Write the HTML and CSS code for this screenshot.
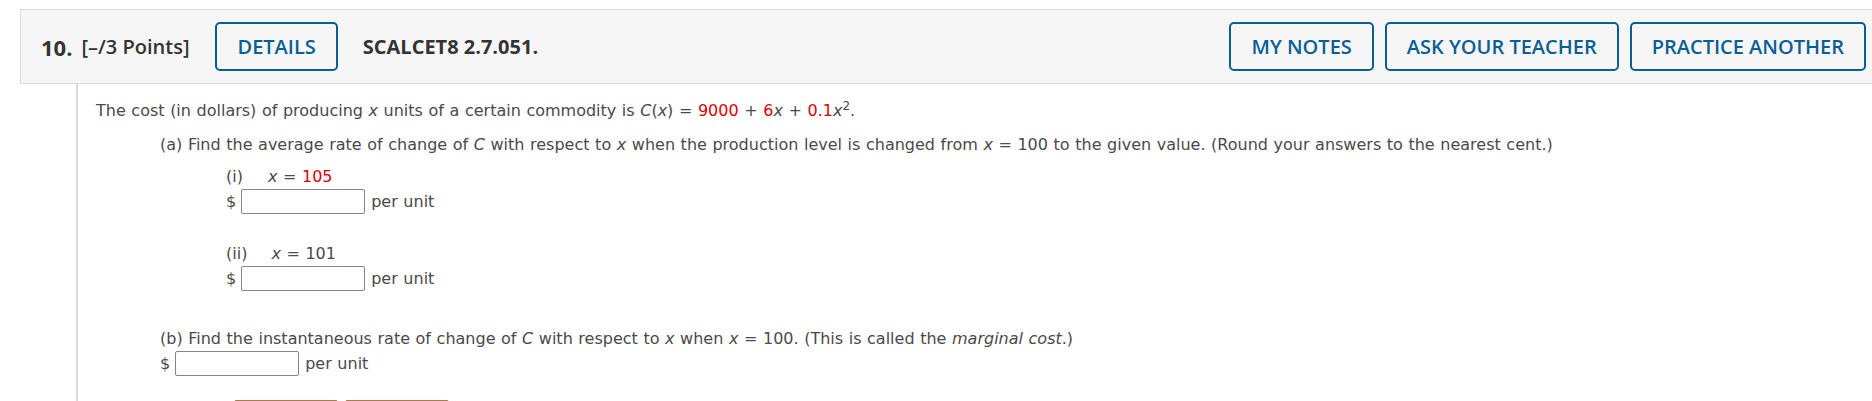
FILE: index.html
```html
<!DOCTYPE html>
<html lang="en">
<head>
<meta charset="utf-8">
<title>Question 10</title>
<link rel="stylesheet" href="styles.css">
</head>
<body>
<div class="question">
  <div class="qhead">
    <span class="qnum">10.</span>
    <span class="qpts">[–/3 Points]</span>
    <button class="hbtn">DETAILS</button>
    <span class="qref">SCALCET8 2.7.051.</span>
    <div class="qactions">
      <button class="hbtn">MY NOTES</button>
      <button class="hbtn">ASK YOUR TEACHER</button>
      <button class="hbtn">PRACTICE ANOTHER</button>
    </div>
  </div>
  <div class="qbody">
    <div class="line intro">The cost (in dollars) of producing <i>x</i> units of a certain commodity is <i>C</i>(<i>x</i>) = <span class="red">9000</span> + <span class="red">6</span><i>x</i> + <span class="red">0.1</span><i>x</i><sup>2</sup>.</div>
    <div class="part">
      <div class="line">(a) Find the average rate of change of <i>C</i> with respect to <i>x</i> when the production level is changed from <i>x</i> = 100 to the given value. (Round your answers to the nearest cent.)</div>
      <div class="sub">
        <div class="line sublabel">(i)<span class="eq"><i>x</i> = <span class="red">105</span></span></div>
        <div class="ansrow"><span>$</span><input class="ans" type="text"><span class="unit">per unit</span></div>
      </div>
      <div class="sub second">
        <div class="line sublabel">(ii)<span class="eq eq2"><i>x</i> = 101</span></div>
        <div class="ansrow"><span>$</span><input class="ans" type="text"><span class="unit">per unit</span></div>
      </div>
    </div>
    <div class="part partb">
      <div class="line">(b) Find the instantaneous rate of change of <i>C</i> with respect to <i>x</i> when <i>x</i> = 100. (This is called the <i>marginal cost</i>.)</div>
      <div class="ansrow"><span>$</span><input class="ans" type="text"><span class="unit">per unit</span></div>
    </div>
    <div class="submitrow">
      <button class="obtn"></button>
      <button class="obtn"></button>
    </div>
  </div>
</div>
</body>
</html>
```

FILE: styles.css
```css
html, body {
  margin: 0;
  padding: 0;
  background: #ffffff;
  overflow: hidden;
}

.question {
  padding: 9px 0 0 20px;
}

.qhead {
  box-sizing: border-box;
  height: 75px;
  display: flex;
  align-items: center;
  padding: 0 6px 0 20px;
  background: #f6f6f6;
  border-top: 1px solid #dcdcdc;
  border-bottom: 1px solid #dcdcdc;
  border-left: 1px solid #dcdcdc;
  font-family: "Open Sans", "Liberation Sans", sans-serif;
  color: #333333;
}

.qnum {
  font-size: 22px;
  font-weight: 700;
  margin-right: 9px;
}

.qpts {
  font-size: 20px;
  font-weight: 600;
  margin-right: 26px;
}

.qref {
  font-size: 20px;
  font-weight: 700;
  margin-left: 25px;
}

.hbtn {
  box-sizing: border-box;
  height: 49px;
  padding: 0 20px;
  border: 2px solid #0a5e96;
  border-radius: 5px;
  background: #f6f6f6;
  color: #0a5e96;
  font-family: "Open Sans", "Liberation Sans", sans-serif;
  font-size: 20px;
  font-weight: 600;
  white-space: nowrap;
}

.qactions {
  margin-left: auto;
  display: flex;
  gap: 11px;
}

.qbody {
  margin-left: 56px;
  border-left: 2px solid #dadada;
  padding: 15px 0 0 18px;
  font-family: "DejaVu Sans", Verdana, sans-serif;
  font-size: 16px;
  word-spacing: 0.5px;
  color: #4a4a4a;
}

.line {
  line-height: 24px;
  white-space: nowrap;
}

.red {
  color: #e00000;
}

sup {
  font-size: 12px;
  line-height: 0;
  vertical-align: 6px;
}

.part {
  margin: 10px 0 0 64px;
}

.sub {
  margin: 8px 0 0 66px;
}

.sub.second {
  margin-top: 28px;
}

.eq {
  margin-left: 25px;
}

.eq2 {
  margin-left: 24px;
}

.ansrow {
  display: flex;
  align-items: center;
  line-height: 24px;
}

.ans {
  box-sizing: border-box;
  width: 124px;
  height: 25px;
  margin: 0 6px 0 5px;
  border: 1px solid #858585;
  border-radius: 2px;
  background: #ffffff;
  padding: 0;
}

.partb {
  margin-top: 36px;
}

.submitrow {
  display: flex;
  gap: 7px;
  margin: 24px 0 0 138px;
}

.obtn {
  width: 104px;
  height: 32px;
  border: 1px solid #b27a41;
  border-radius: 2px;
  background: #f3c48d;
  padding: 0;
}
```
